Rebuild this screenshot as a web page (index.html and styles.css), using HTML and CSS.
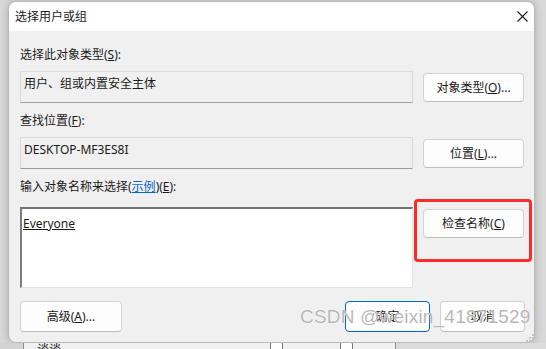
FILE: index.html
```html
<!DOCTYPE html>
<html lang="zh-CN">
<head>
    <meta charset="UTF-8">
    <title>选择用户或组</title>
    <link rel="stylesheet" href="styles.css">
</head>
<body>
    <div class="desktop">
        <!-- Dialog -->
        <div class="dialog">
            <div class="titlebar">
                <span class="title">选择用户或组</span>
                <svg class="close" width="11" height="11" viewBox="0 0 11 11">
                    <path d="M0.5 0.5 L10.5 10.5 M10.5 0.5 L0.5 10.5" stroke="#1a1a1a" stroke-width="1.1" fill="none"/>
                </svg>
            </div>

            <div class="content">
                <div class="label">选择此对象类型(<u>S</u>):</div>
                <div class="row">
                    <div class="field">用户、组或内置安全主体</div>
                    <button class="btn">对象类型(<u>O</u>)...</button>
                </div>

                <div class="label label-gap">查找位置(<u>F</u>):</div>
                <div class="row">
                    <div class="field">DESKTOP-MF3ES8I</div>
                    <button class="btn">位置(<u>L</u>)...</button>
                </div>

                <div class="label label-gap">输入对象名称来选择(<span class="link">示例</span>)(<u>E</u>):</div>
                <div class="row row-names">
                    <div class="names"><u>Everyone</u></div>
                    <div class="check-wrap">
                        <button class="btn">检查名称(<u>C</u>)</button>
                        <div class="highlight"></div>
                    </div>
                </div>

                <div class="footer">
                    <button class="btn btn-wide">高级(<u>A</u>)...</button>
                    <div class="spacer"></div>
                    <button class="btn btn-small btn-primary">确定</button>
                    <button class="btn btn-small">取消</button>
                </div>
            </div>
        </div>

        <!-- Window behind the dialog -->
        <div class="under">
            <div class="under-left"></div>
            <div class="under-mid">
                <span class="under-text">谈谈</span>
                <span class="under-box box-a"></span>
                <span class="under-box box-b"></span>
            </div>
            <div class="under-right"></div>
        </div>

        <div class="watermark">CSDN @weixin_41871529</div>
        <svg class="grip" width="9" height="9" viewBox="0 0 9 9">
            <rect x="6" y="0" width="2" height="2" fill="#c4c4c4"/>
            <rect x="3" y="3" width="2" height="2" fill="#c4c4c4"/>
            <rect x="6" y="3" width="2" height="2" fill="#c4c4c4"/>
            <rect x="0" y="6" width="2" height="2" fill="#c4c4c4"/>
            <rect x="3" y="6" width="2" height="2" fill="#c4c4c4"/>
            <rect x="6" y="6" width="2" height="2" fill="#c4c4c4"/>
        </svg>
    </div>
</body>
</html>
```

FILE: styles.css
```css
/* Base */
body {
    margin: 0;
    width: 546px;
    height: 349px;
    overflow: hidden;
    background: #d9d9d9;
    font-family: "Noto Sans", "Noto Sans CJK SC", sans-serif;
    font-size: 12px;
    color: #1a1a1a;
}

.desktop {
    position: relative;
    height: 349px;
}

/* Dialog */
.dialog {
    margin: 1px 0 0 8px;
    width: 527px;
    height: 342px;
    box-sizing: border-box;
    background: #f0f0f0;
    border: 1px solid #b9b9b9;
    border-radius: 8px;
    box-shadow: 0 0 8px rgba(0, 0, 0, 0.22);
    overflow: hidden;
    display: flex;
    flex-direction: column;
}

.titlebar {
    height: 29px;
    flex-shrink: 0;
    background: #fff;
    display: flex;
    align-items: center;
    justify-content: space-between;
    padding: 0 6px 0 6px;
}

.title {
    line-height: 16px;
}

.content {
    padding: 16px 9px 0 11px;
}

.label {
    line-height: 16px;
    height: 16px;
}

.label-gap {
    margin-top: 10px;
}

.link {
    color: #0066cc;
    text-decoration: underline;
}

.row {
    display: grid;
    grid-template-columns: 393px 101px;
    column-gap: 10px;
    align-items: start;
    margin-top: 8px;
}

.field {
    height: 32px;
    box-sizing: border-box;
    border: 1px solid #dadada;
    border-bottom-color: #9c9c9c;
    padding: 4px 3px;
    line-height: 16px;
}

.names {
    height: 81px;
    box-sizing: border-box;
    background: #fff;
    border-top: 2px solid #727272;
    border-left: 2px solid #7c7c7c;
    border-right: 1px solid #e2e2e2;
    border-bottom: 1px solid #e2e2e2;
    padding: 7px 1px;
    line-height: 16px;
}

.row-names {
    margin-top: 12px;
}

/* Buttons */
.btn {
    height: 29px;
    margin-top: 2px;
    padding: 0;
    background: #fdfdfd;
    border: 1px solid #d2d2d2;
    border-bottom-color: #bebebe;
    border-radius: 4px;
    font: inherit;
    color: #1a1a1a;
    line-height: 16px;
}

.check-wrap {
    position: relative;
    display: flex;
    flex-direction: column;
}

.highlight {
    position: absolute;
    top: -8px;
    left: -9px;
    right: -8px;
    height: 63px;
    box-sizing: border-box;
    border: 3px solid #ff2a2a;
    border-radius: 4px;
}

.footer {
    display: flex;
    gap: 10px;
    margin-top: 11px;
}

.footer .btn {
    height: 31px;
}

.btn-wide {
    width: 102px;
}

.btn-small {
    width: 85px;
}

.btn-primary {
    border-color: #0067c0;
}

.spacer {
    flex: 1;
}

/* Window behind */
.under {
    display: flex;
    height: 6px;
}

.under-left {
    width: 23px;
    background: #d2d2d2;
    border-right: 1px solid #8e8e8e;
}

.under-mid {
    position: relative;
    width: 371px;
    background: #f1f1f1;
    border-right: 1px solid #8e8e8e;
    overflow: hidden;
}

.under-text {
    position: absolute;
    left: 13px;
    top: -1px;
    line-height: 16px;
}

.under-box {
    position: absolute;
    top: -1px;
    width: 11px;
    height: 11px;
    border: 1px solid #777;
    border-radius: 2px;
    background: #fff;
}

.box-a {
    left: 246px;
}

.box-b {
    left: 316px;
}

.under-right {
    flex: 1;
    background: #dcdcdc;
}

/* Overlays */
.watermark {
    position: absolute;
    left: 300px;
    top: 305px;
    font-family: "Liberation Sans", sans-serif;
    font-size: 19px;
    line-height: 22px;
    color: rgba(120, 120, 120, 0.55);
    text-shadow: 0 0 1px #fff, 0 0 1px #fff;
    letter-spacing: 0.2px;
}

.grip {
    position: absolute;
    left: 526px;
    top: 333px;
}
```
